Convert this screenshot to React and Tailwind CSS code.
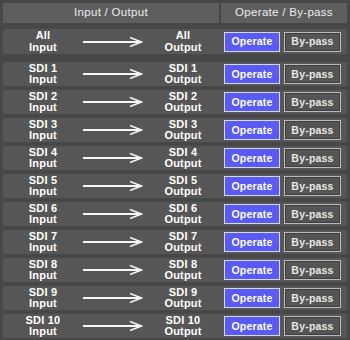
import React from 'react';

const channels = [
  { top: 'All', bottom: ['Input', 'Output'] },
  ...Array.from({ length: 10 }, (_, i) => ({ top: `SDI ${i + 1}`, bottom: ['Input', 'Output'] })),
];

// --- flecha blanca entre entrada y salida ---
const Arrow = () => (
  <svg width="60" height="12" viewBox="0 0 60 12" className="block">
    <line x1="0" y1="6" x2="58" y2="6" stroke="#f4f4f4" strokeWidth="2" />
    <polyline points="47,1.5 58.5,6 47,10.5" fill="none" stroke="#f4f4f4" strokeWidth="1.6" strokeLinejoin="miter" />
  </svg>
);

const Label = ({ top, bottom }) => (
  <div className="w-[80px] flex flex-col items-center leading-[11.5px] font-bold text-[11px] tracking-[0.2px] text-white">
    <span>{top}</span>
    <span>{bottom}</span>
  </div>
);

const Row = ({ ch, first }) => (
  <div className={`flex items-center bg-[#565656] ${first ? 'h-[25px]' : 'h-[24px]'}`}>
    <Label top={ch.top} bottom={ch.bottom[0]} />
    <div className="w-[60px] flex items-center justify-center">
      <Arrow />
    </div>
    <Label top={ch.top} bottom={ch.bottom[1]} />
    <div className="flex items-center gap-[4px] ml-[1px]">
      <button className="w-[56px] h-[20px] bg-[#5a5af4] border border-[#d8d8ff] text-white font-bold text-[10.5px] tracking-[0.2px] leading-none">
        Operate
      </button>
      <button className="w-[57px] h-[20px] bg-[#555555] border border-[#bcbcbc] shadow-[inset_0_0_0_1px_#3e3e3e] text-[#e6e6e6] font-bold text-[10.5px] tracking-[0.2px] leading-none">
        By-pass
      </button>
    </div>
  </div>
);

export default function App() {
  return (
    <div
      className="w-[350px] h-[340px] bg-[#474747] px-[3px] pt-[3px] overflow-hidden"
      style={{ fontFamily: '"Liberation Sans", Arial, sans-serif' }}
    >
      <div className="flex gap-[2px] h-[20px] text-[11.5px] text-[#ececec] tracking-[0.3px]">
        <div className="w-[216px] bg-[#5e5e5e] flex items-center justify-center">Input / Output</div>
        <div className="flex-1 bg-[#5e5e5e] flex items-center justify-center">Operate / By-pass</div>
      </div>
      <div className="mt-[6px]">
        <Row ch={channels[0]} first />
      </div>
      <div className="mt-[8px] flex flex-col gap-[4px]">
        {channels.slice(1).map((ch) => (
          <Row key={ch.top} ch={ch} />
        ))}
      </div>
    </div>
  );
}
